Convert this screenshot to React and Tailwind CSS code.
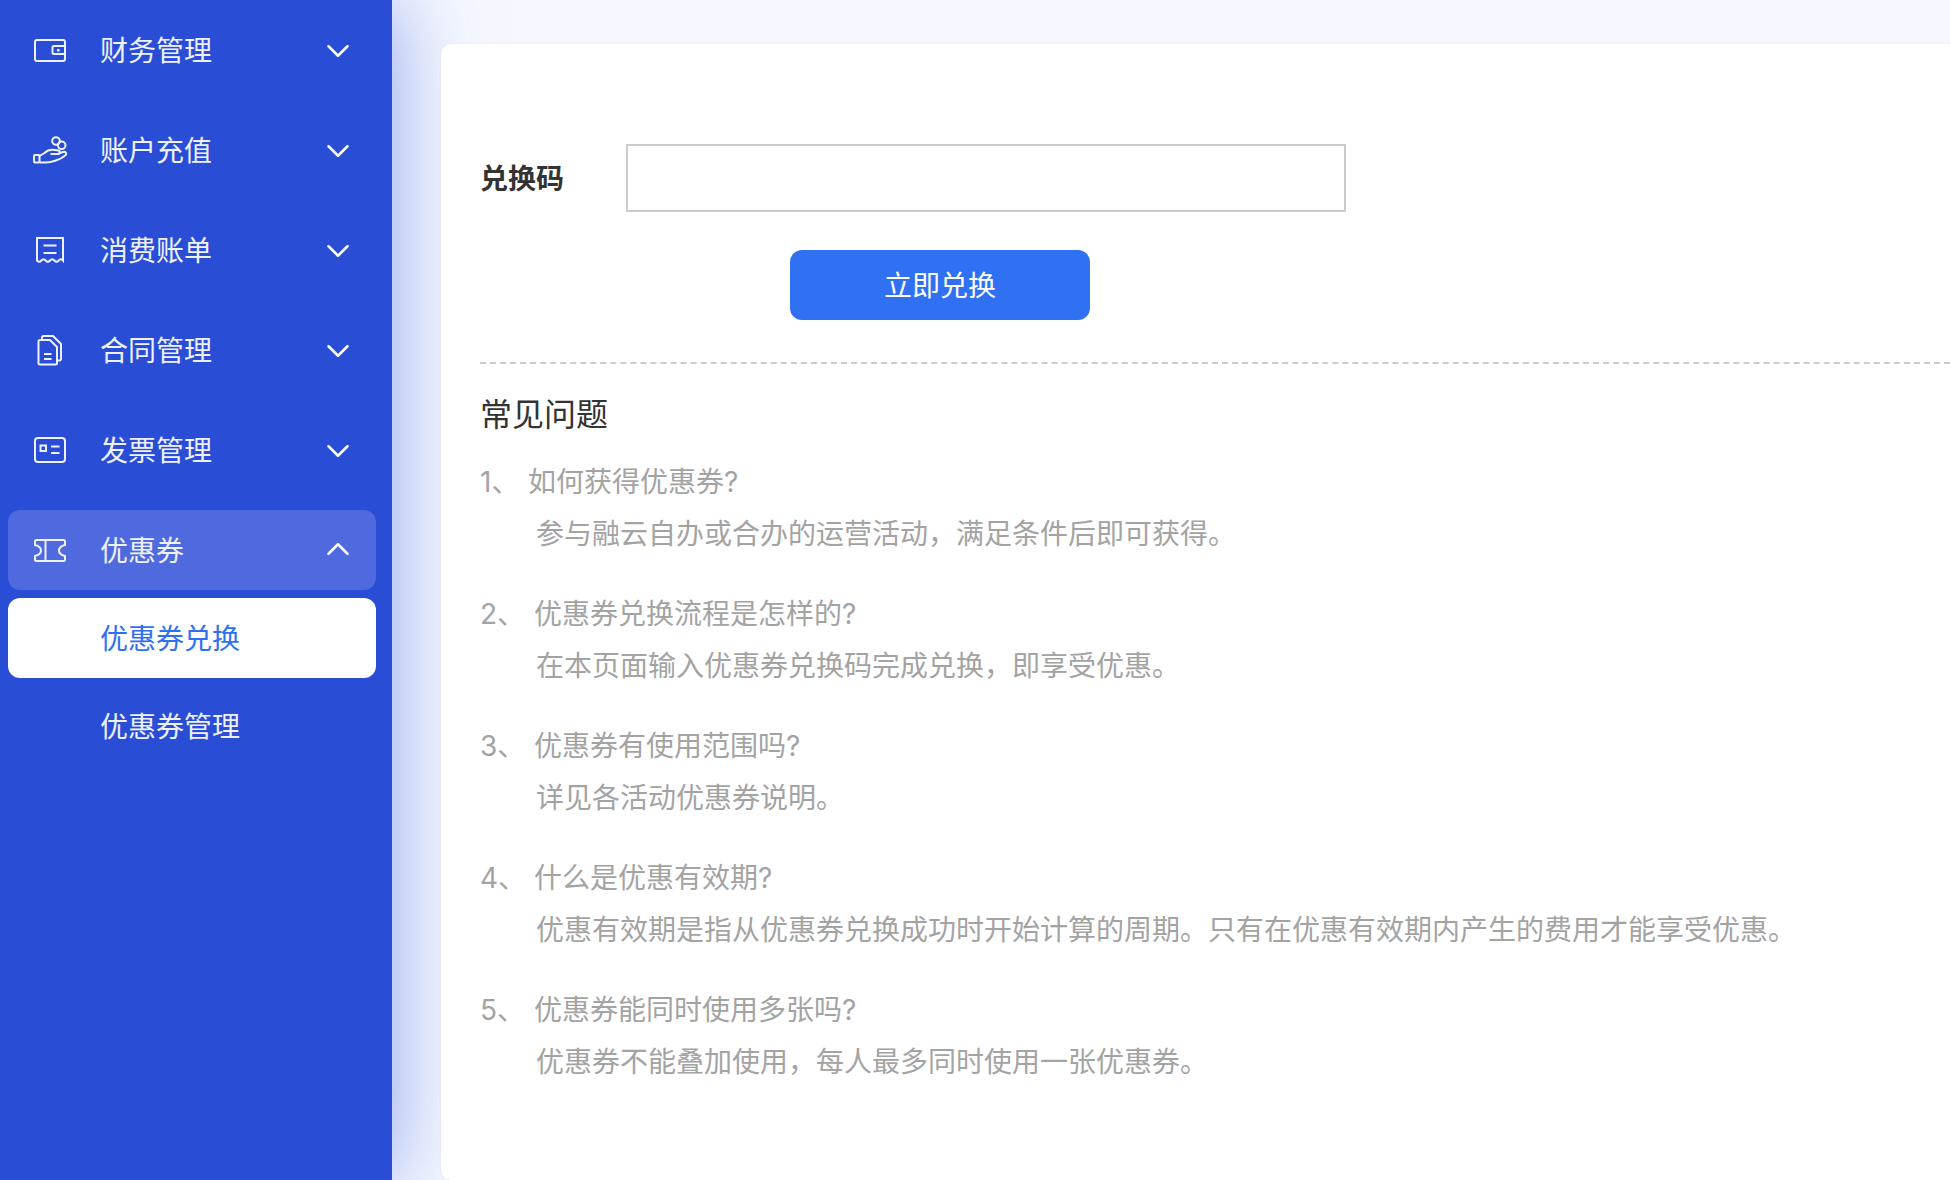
import React from 'react';
import { ChevronDown, ChevronUp } from 'lucide-react';

const WalletIcon = () => (
  <svg className="shrink-0" width="34" height="25" viewBox="0 0 34 25" fill="none" stroke="currentColor" strokeWidth="2">
    <rect x="2" y="2" width="30" height="21" rx="2" />
    <path d="M32 8H21a1.500 1.500 0 0 0-1.500 1.500v5A1.500 1.500 0 0 0 21 16h11" />
    <rect x="24" y="11" width="2.500" height="2.500" fill="currentColor" stroke="none" />
  </svg>
);

const HandIcon = () => (
  <svg className="shrink-0" width="36" height="30" viewBox="0 0 36 30" fill="none" stroke="currentColor" strokeWidth="2">
    <circle cx="24" cy="6" r="3.800" />
    <circle cx="29.700" cy="10.300" r="3.800" />
    <rect x="2" y="20" width="5.500" height="7.500" rx="1" />
    <path d="M7.500 21l5-3c3-3 6-3.500 10-3l4 .5c2 .5 2 3.200 0 3.500h-8" />
    <path d="M26.500 18.500l4.500-1.500c3-1 4.500 2 1.500 4C29 24 20 28 12 27.500H7.500" />
  </svg>
);

const ReceiptIcon = () => (
  <svg className="shrink-0" width="32" height="28" viewBox="0 0 32 28" fill="none" stroke="currentColor" strokeWidth="2">
    <path d="M3 24.500V2h26v22.500q-2.170-2.500-4.330 0t-4.330 0-4.340 0-4.330 0-4.330 0-4.340 0z" />
    <path d="M9.500 9.500h13M9.500 17h13" />
  </svg>
);

const ContractIcon = () => (
  <svg className="shrink-0" width="28" height="32" viewBox="0 0 28 32" fill="none" stroke="currentColor" strokeWidth="2">
    <path d="M6 6V3.500A1.500 1.500 0 0 1 7.500 2H17l8 8v15a1.500 1.500 0 0 1-1.500 1.500H21" />
    <path d="M4 6h10l7 7v16a1.500 1.500 0 0 1-1.500 1.500H4A1.500 1.500 0 0 1 2.500 29V7.500A1.500 1.500 0 0 1 4 6z" />
    <path d="M8 20h7.500M8 25h7.500" />
  </svg>
);

const InvoiceIcon = () => (
  <svg className="shrink-0" width="34" height="28" viewBox="0 0 34 28" fill="none" stroke="currentColor" strokeWidth="2">
    <rect x="2" y="2" width="30" height="24" rx="3" />
    <rect x="7.500" y="9.500" width="5.500" height="5.500" />
    <path d="M18 10.500h8.500M18 17h8.500" />
  </svg>
);

const TicketIcon = () => (
  <svg className="shrink-0" width="34" height="25" viewBox="0 0 34 25" fill="none" stroke="currentColor" strokeWidth="2">
    <path d="M3.500 2h27A1.500 1.500 0 0 1 32 3.500V7c-8 2-8 9 0 11v3.500a1.500 1.500 0 0 1-1.500 1.500h-27A1.500 1.500 0 0 1 2 21.500V18c8-2 8-9 0-11V3.500A1.500 1.500 0 0 1 3.500 2z" />
    <path d="M12.500 2v21" />
  </svg>
);

const MENU = [
  { label: '财务管理', icon: WalletIcon },
  { label: '账户充值', icon: HandIcon },
  { label: '消费账单', icon: ReceiptIcon },
  { label: '合同管理', icon: ContractIcon },
  { label: '发票管理', icon: InvoiceIcon },
];

const FAQ = [
  { n: '1、', q: '如何获得优惠券?', a: '参与融云自办或合办的运营活动，满足条件后即可获得。', w: 'w-[48px]' },
  { n: '2、', q: '优惠券兑换流程是怎样的?', a: '在本页面输入优惠券兑换码完成兑换，即享受优惠。', w: 'w-[54px]' },
  { n: '3、', q: '优惠券有使用范围吗?', a: '详见各活动优惠券说明。', w: 'w-[54px]' },
  { n: '4、', q: '什么是优惠有效期?', a: '优惠有效期是指从优惠券兑换成功时开始计算的周期。只有在优惠有效期内产生的费用才能享受优惠。', w: 'w-[54px]' },
  { n: '5、', q: '优惠券能同时使用多张吗?', a: '优惠券不能叠加使用，每人最多同时使用一张优惠券。', w: 'w-[54px]' },
];

function MenuRow({ label, icon: Icon, open }) {
  return (
    <div className={`h-[80px] pl-[26px] pr-[19px] flex items-center rounded-xl ${open ? 'bg-[#4f69de]' : ''}`}>
      <span className="w-[32px] h-[32px] flex items-center justify-center text-[#eef1ff]">
        <Icon />
      </span>
      <span className="ml-[34px] pt-[2px] flex-1 text-[28px] text-[#eef1ff]">{label}</span>
      {open
        ? <ChevronUp size={38} strokeWidth={1.6} className="text-white -mt-[2px]" />
        : <ChevronDown size={38} strokeWidth={1.6} className="text-white mt-[2px]" />}
    </div>
  );
}

export default function App() {
  return (
    <div className="flex h-[1180px] w-[1950px] overflow-hidden bg-[#f5f8ff] font-['Inter','Noto_Sans_CJK_SC',sans-serif]">
      {/* Sidebar */}
      <aside className="w-[392px] flex-shrink-0 bg-[#2a4dd6] pt-[10px] pl-2 pr-4 shadow-[0_0_80px_rgba(42,77,214,0.5)] z-10">
        <div className="flex flex-col gap-[20px]">
          {MENU.map((m) => <MenuRow key={m.label} label={m.label} icon={m.icon} />)}
          <MenuRow label="优惠券" icon={TicketIcon} open />
        </div>
        <div className="mt-[8px] h-[80px] pl-[92px] pt-[2px] flex items-center rounded-xl bg-white text-[28px] text-[#2f6ff2]">
          优惠券兑换
        </div>
        <div className="mt-[8px] h-[80px] pl-[92px] pt-[2px] flex items-center text-[28px] text-[#eef1ff]">
          优惠券管理
        </div>
      </aside>

      {/* Content */}
      <main className="flex-1 pl-[49px] pt-[44px]">
        <div className="relative z-20 h-full bg-white rounded-l-[10px] pl-[39px] pt-[100px] shadow-[0_0_3px_rgba(180,170,230,0.2)]">
          <div className="flex items-center">
            <span className="w-[146px] pt-[2px] text-[28px] font-bold text-[#333333]">兑换码</span>
            <input className="w-[720px] h-[68px] border-2 border-[#cccccc] bg-white" />
          </div>
          <button className="block mt-[38px] ml-[310px] w-[300px] h-[70px] pt-[2px] rounded-xl bg-[#3070f2] text-[28px] text-white">
            立即兑换
          </button>
          <div className="mt-[42px] border-t-2 border-dashed border-[#cccccc]" />
          <h2 className="mt-[25px] text-[32px] leading-[52px] font-normal text-[#333333]">常见问题</h2>
          <div className="mt-[15px] flex flex-col gap-[28px] text-[28px] leading-[52px] text-[#a3a3a3]">
            {FAQ.map((f) => (
              <div key={f.n}>
                <p className="whitespace-nowrap">
                  <span className={`inline-block ${f.w}`}>{f.n}</span>{f.q}
                </p>
                <p className="pl-[56px] whitespace-nowrap">{f.a}</p>
              </div>
            ))}
          </div>
        </div>
      </main>
    </div>
  );
}
